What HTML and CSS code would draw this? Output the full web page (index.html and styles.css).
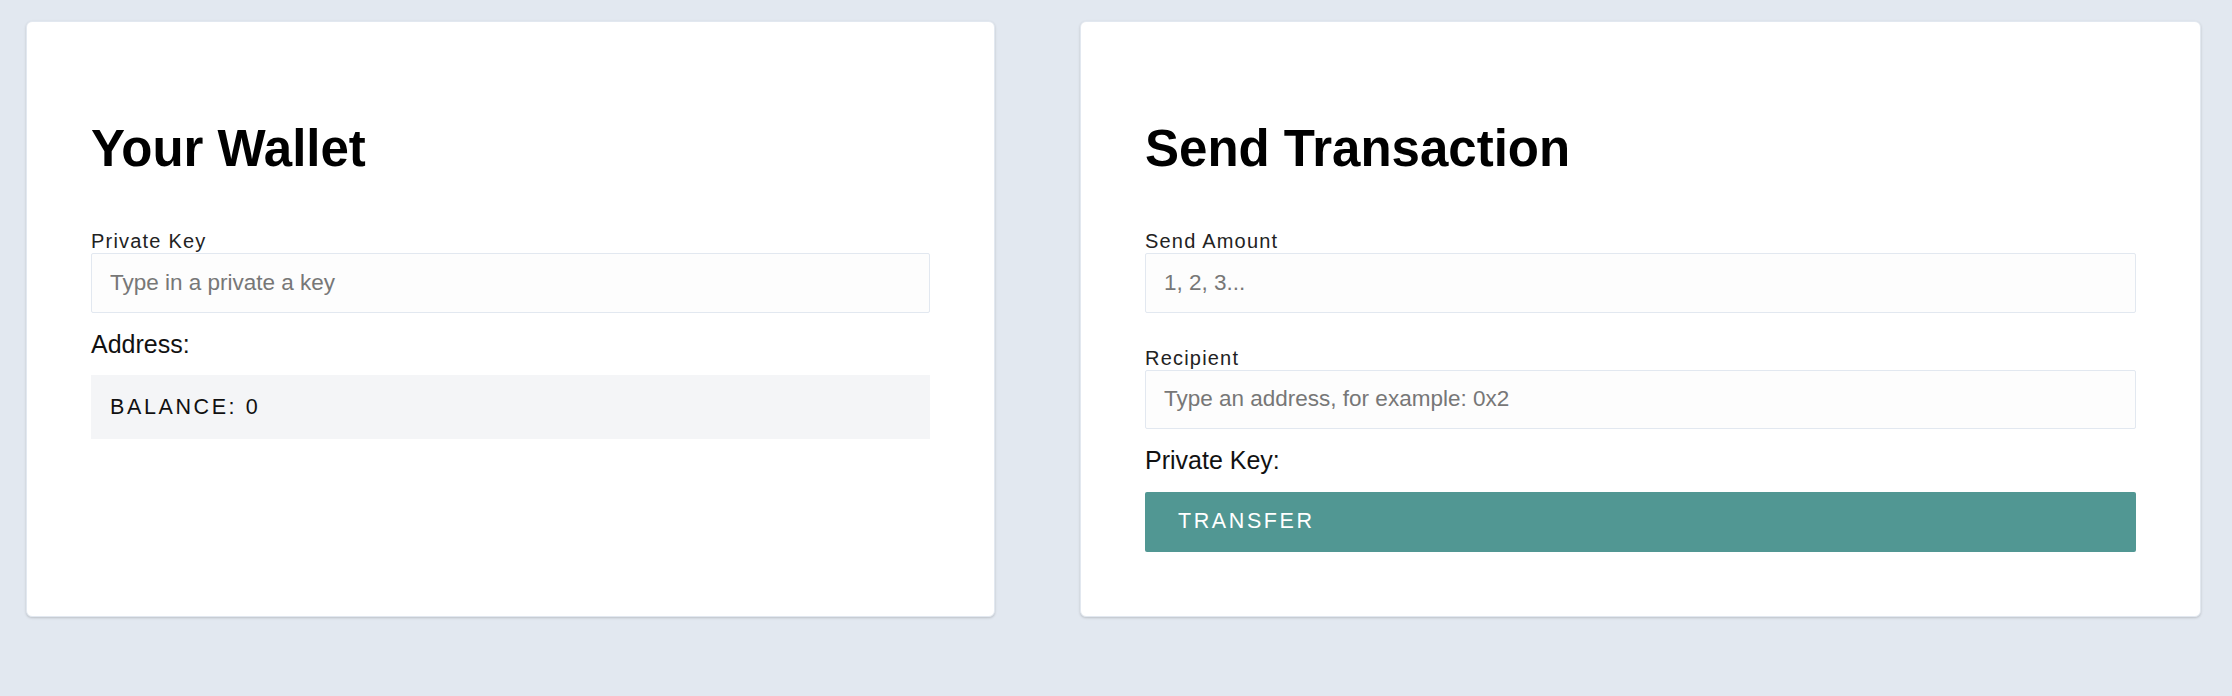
FILE: index.html
```html
<!DOCTYPE html>
<html lang="en">
<head>
<meta charset="utf-8">
<title>ECDSA Node</title>
<link rel="stylesheet" href="styles.css">
</head>
<body>
  <div class="app">
    <div class="container wallet">
      <h1>Your Wallet</h1>
      <label class="field">
        <span class="field-label">Private Key</span>
        <input class="field-input" placeholder="Type in a private a key">
      </label>
      <div class="info">Address:</div>
      <div class="balance">Balance: 0</div>
    </div>
    <form class="container transfer">
      <h1>Send Transaction</h1>
      <label class="field">
        <span class="field-label">Send Amount</span>
        <input class="field-input" placeholder="1, 2, 3...">
      </label>
      <label class="field">
        <span class="field-label">Recipient</span>
        <input class="field-input" placeholder="Type an address, for example: 0x2">
      </label>
      <div class="info">Private Key:</div>
      <button type="button" class="button">Transfer</button>
    </form>
  </div>
</body>
</html>
```

FILE: styles.css
```css
html, body {
  margin: 0;
  padding: 0;
}

body {
  background-color: #e2e8f0;
  font-family: "Liberation Sans", Arial, Helvetica, sans-serif;
  color: #000;
  height: 696px;
}

.app {
  display: grid;
  grid-template-columns: 969px 1fr;
  column-gap: 85px;
  padding: 21px 31px 0 26px;
  align-items: stretch;
}

.container {
  margin: 0;
  display: flex;
  flex-direction: column;
  background-color: #fff;
  border: 1px solid #e2e8f0;
  border-radius: 6px;
  box-shadow: 0 1px 3px 0 rgba(0, 0, 0, 0.12), 0 1px 2px 0 rgba(0, 0, 0, 0.06);
  padding: 64px 64px 64px;
  min-height: 0;
}

h1 {
  font-size: 51px;
  font-weight: 700;
  line-height: 58px;
  margin: 34px 0 35px;
  color: #000;
}

.field {
  display: flex;
  flex-direction: column;
  margin: 17px 0;
}

.field-label {
  font-size: 20px;
  line-height: 23px;
  letter-spacing: 1.2px;
  color: #222;
}

.field-input {
  box-sizing: border-box;
  height: 59.5px;
  margin: 0;
  padding: 0 18px;
  border: 1px solid #e2e8f0;
  border-radius: 2px;
  background-color: #fdfdfd;
  font-family: "Liberation Sans", Arial, Helvetica, sans-serif;
  font-size: 22.5px;
  color: #222;
  outline: none;
}

.field-input::placeholder {
  color: #777;
}

.info {
  font-size: 25px;
  line-height: 29px;
  color: #111;
}

.balance {
  margin-top: 16px;
  padding: 20px 19px;
  line-height: 24px;
  font-size: 21.5px;
  letter-spacing: 2.6px;
  text-transform: uppercase;
  background-color: #f4f5f7;
  color: #111;
}

.button {
  margin: 17px 0 0;
  height: 59.5px;
  box-sizing: border-box;
  display: flex;
  align-items: center;
  padding: 0 33px;
  border: none;
  border-radius: 2px;
  background-color: #519793;
  color: #fff;
  font-family: "Liberation Sans", Arial, Helvetica, sans-serif;
  font-size: 21.5px;
  letter-spacing: 2.6px;
  text-transform: uppercase;
  cursor: pointer;
}
```
